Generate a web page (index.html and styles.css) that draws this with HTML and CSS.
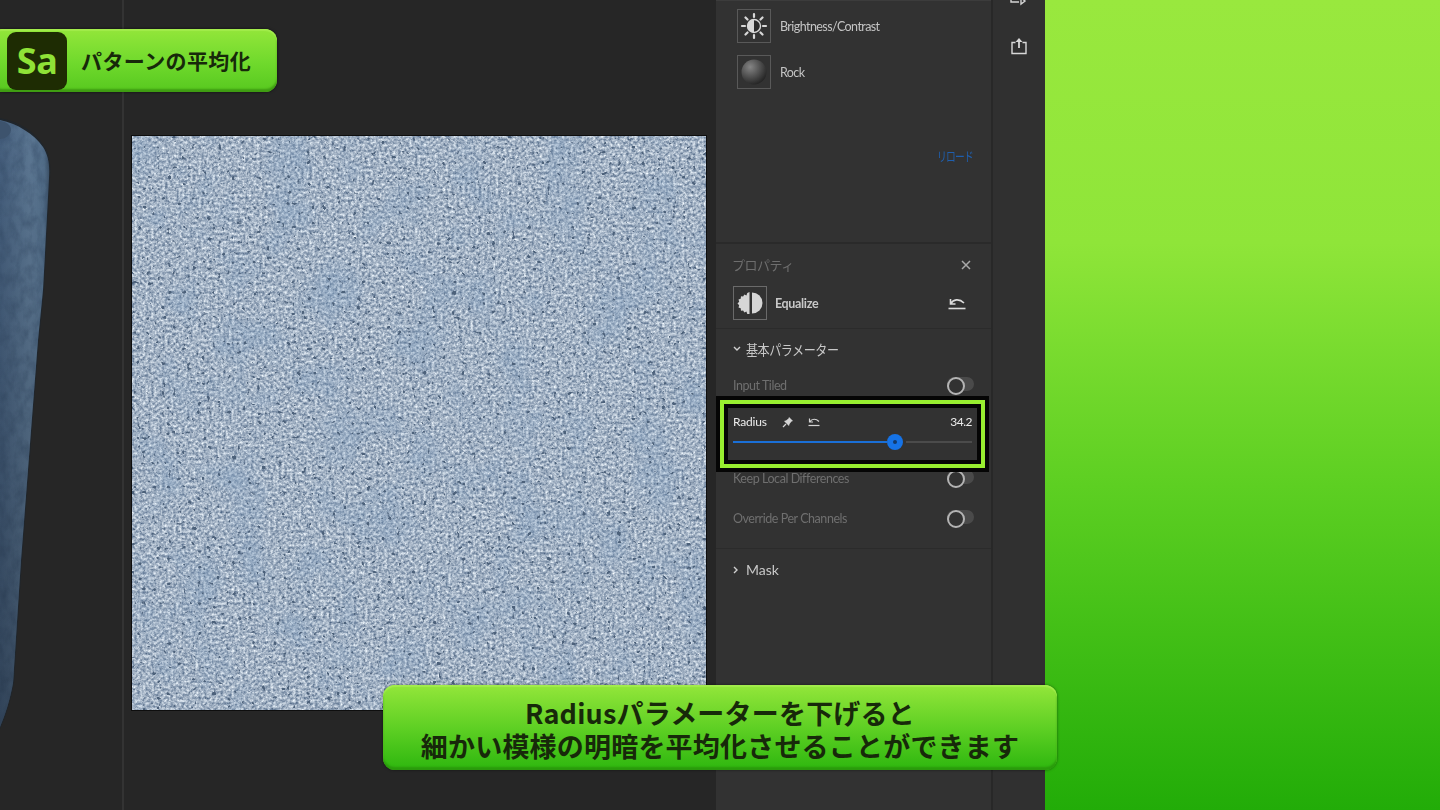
FILE: index.html
```html
<!DOCTYPE html>
<html lang="ja">
<head>
<meta charset="utf-8">
<title>パターンの平均化</title>
<link rel="stylesheet" href="styles.css">
</head>
<body>
<div class="stage">
  <main class="workspace">
    <section class="pane-3d">
      <svg class="vase" viewBox="0 0 122 810" width="122" height="810" aria-hidden="true">
        <defs>
          <linearGradient id="vaseShade" x1="0" x2="1" y1="0" y2="0">
            <stop offset="0" stop-color="#46607e"/>
            <stop offset=".6" stop-color="#5c7793"/>
            <stop offset=".88" stop-color="#54708c"/>
            <stop offset="1" stop-color="#3a4e64"/>
          </linearGradient>
          <linearGradient id="vaseFade" x1="0" x2="0" y1="0" y2="1">
            <stop offset="0" stop-color="#000" stop-opacity="0"/>
            <stop offset="1" stop-color="#000" stop-opacity=".3"/>
          </linearGradient>
          <filter id="vaseGrain" x="0" y="0" width="100%" height="100%" color-interpolation-filters="sRGB">
            <feTurbulence type="fractalNoise" baseFrequency=".12 .07" numOctaves="4" seed="5"/>
            <feColorMatrix values="0 0 0 0 .2  0 0 0 0 .29  0 0 0 0 .4  .9 0 0 0 -.33"/>
            <feComposite in2="SourceGraphic" operator="in"/>
          </filter>
          <clipPath id="vaseClip">
            <path d="M0 120C18 124 34 134 43 147C48 155 50 164 49 178L43 290L38 340L21 560L13 683C10 700 5 715 0 727Z"/>
          </clipPath>
        </defs>
        <path d="M0 118C20 122 35 132 44 146C50 155 51 164 50 178L44 290L39 340L22 560L14 683C11 700 6 716 0 729Z" fill="#20262c"/>
        <g clip-path="url(#vaseClip)">
          <rect x="0" y="118" width="50" height="612" fill="url(#vaseShade)"/>
          <rect x="0" y="118" width="50" height="612" filter="url(#vaseGrain)"/>
          <rect x="0" y="118" width="50" height="612" fill="url(#vaseFade)"/>
          <ellipse cx="0" cy="130" rx="11" ry="9" fill="#3d536d"/>
        </g>
      </svg>
    </section>
    <section class="pane-2d">
      <svg class="texture" viewBox="0 0 574 574" width="574" height="574" aria-label="テクスチャ">
        <defs>
          <filter id="stone" x="0" y="0" width="100%" height="100%" color-interpolation-filters="sRGB">
            <feTurbulence type="fractalNoise" baseFrequency=".36" numOctaves="4" seed="11" result="fine"/>
            <feColorMatrix in="fine" result="base" values=".8 0 0 0 .24  .72 0 0 0 .34  .6 0 0 0 .47  0 0 0 0 1"/>
            <feTurbulence type="fractalNoise" baseFrequency=".022" numOctaves="3" seed="4" result="patch"/>
            <feColorMatrix in="patch" result="patchTint" values="0 0 0 0 .5  0 0 0 0 .62  0 0 0 0 .75  1 0 0 0 -.47"/>
            <feTurbulence type="fractalNoise" baseFrequency=".2" numOctaves="2" seed="23" result="speck"/>
            <feColorMatrix in="speck" result="specks" values="0 0 0 0 .3  0 0 0 0 .38  0 0 0 0 .48  12 0 0 0 -8.300"/>
            <feMerge>
              <feMergeNode in="base"/>
              <feMergeNode in="patchTint"/>
              <feMergeNode in="specks"/>
            </feMerge>
          </filter>
        </defs>
        <rect width="574" height="574" filter="url(#stone)"/>
      </svg>
    </section>
  </main>

  <aside class="panel">
    <section class="layers">
      <div class="layer">
        <span class="thumb">
          <svg viewBox="0 0 34 34" width="34" height="34" aria-hidden="true">
            <circle cx="17" cy="17" r="6.500" fill="#2c2c2c" stroke="#d8d8d8" stroke-width="1.400"/>
            <path d="M17 10.500a6.500 6.500 0 0 0 0 13Z" fill="#d8d8d8"/>
            <path d="M17 5v3M17 26v3M5 17h3M26 17h3M8.500 8.500l2 2M23.500 23.500l2 2M8.500 25.500l2-2M23.500 10.500l2-2" stroke="#d8d8d8" stroke-width="2.200" stroke-linecap="round"/>
          </svg>
        </span>
        <span class="layer-name">Brightness/Contrast</span>
      </div>
      <div class="layer">
        <span class="thumb">
          <svg viewBox="0 0 34 34" width="34" height="34" aria-hidden="true">
            <defs>
              <radialGradient id="ball" cx=".35" cy=".3" r=".8">
                <stop offset="0" stop-color="#858585"/>
                <stop offset=".5" stop-color="#505050"/>
                <stop offset="1" stop-color="#1c1c1c"/>
              </radialGradient>
            </defs>
            <circle cx="17" cy="17" r="12.500" fill="url(#ball)"/>
          </svg>
        </span>
        <span class="layer-name">Rock</span>
      </div>
      <div class="reload-row"><span class="reload">リロード</span></div>
    </section>

    <section class="properties">
      <header class="prop-head">
        <span class="prop-title">プロパティ</span>
        <svg class="close" viewBox="0 0 10 10" width="10" height="10" aria-hidden="true">
          <path d="M1 1l8 8M9 1l-8 8" stroke="#a8a8a8" stroke-width="1.500"/>
        </svg>
      </header>
      <div class="node-row">
        <span class="thumb node-thumb">
          <svg viewBox="0 0 34 34" width="34" height="34" aria-hidden="true">
            <path d="M19 6.500a10.500 10.500 0 0 1 0 21Z" fill="#d6d6d6"/>
            <path d="M16.500 6v22h-2.200l-.9-2.400-2 .9-1.300-2-2.100.2-.3-2.400-2.200-.8.7-2.300-1.700-1.700 1.700-1.700-.7-2.300 2.200-.8.3-2.400 2.100.2 1.300-2 2 .9.9-2.400Z" fill="#d6d6d6"/>
          </svg>
        </span>
        <strong class="node-name">Equalize</strong>
        <svg class="undo-big" viewBox="0 0 20 16" width="20" height="16" aria-hidden="true">
          <path d="M4 8.500C6 4.500 12 3 17 8M3.500 4v5h5" fill="none" stroke="#dcdcdc" stroke-width="1.600"/>
          <path d="M1.500 13.500h17" stroke="#dcdcdc" stroke-width="1.600"/>
        </svg>
      </div>
      <div class="group-head">
        <svg viewBox="0 0 8 6" width="8" height="6" aria-hidden="true"><path d="M1 1l3 3 3-3" fill="none" stroke="#d0d0d0" stroke-width="1.400"/></svg>
        <span class="group-title">基本パラメーター</span>
      </div>
      <div class="param param-first">
        <span class="param-label">Input Tiled</span>
        <span class="toggle"></span>
      </div>
      <div class="radius">
        <div class="radius-top">
          <span class="radius-label">Radius</span>
          <svg class="pin" viewBox="0 0 12 12" width="12" height="12" aria-hidden="true">
            <path d="M7 1l4 4-1.500.5L7.500 8 7 10 2 5l2-.5L6.500 2.500Z" fill="#d4d4d4"/>
            <path d="M4 8l-3 3" stroke="#d4d4d4" stroke-width="1.200"/>
          </svg>
          <svg class="undo-small" viewBox="0 0 14 12" width="14" height="12" aria-hidden="true">
            <path d="M3 5.500C5 2.500 9 2.500 12 5.500M2.500 2.500v3.500H6" fill="none" stroke="#d4d4d4" stroke-width="1.200"/>
            <path d="M1.500 9.500h11" stroke="#d4d4d4" stroke-width="1.200"/>
          </svg>
          <span class="radius-value">34.2</span>
        </div>
        <div class="slider">
          <span class="slider-fill"></span>
          <span class="slider-thumb"></span>
          <span class="slider-rest"></span>
        </div>
      </div>
      <div class="param param-keep">
        <span class="param-label">Keep Local Differences</span>
        <span class="toggle"></span>
      </div>
      <div class="param param-override">
        <span class="param-label">Override Per Channels</span>
        <span class="toggle"></span>
      </div>
      <div class="group-head group-mask">
        <svg viewBox="0 0 6 8" width="6" height="8" aria-hidden="true"><path d="M1 1l3 3-3 3" fill="none" stroke="#d0d0d0" stroke-width="1.400"/></svg>
        <span>Mask</span>
      </div>
    </section>
  </aside>

  <nav class="toolbar">
    <svg class="tool-top" viewBox="0 0 18 8" width="18" height="8" aria-hidden="true">
      <path d="M1 1v3h8M11 0l4 3-4 3Z" fill="none" stroke="#d4d4d4" stroke-width="1.400"/>
    </svg>
    <svg class="tool-share" viewBox="0 0 18 18" width="18" height="18" aria-hidden="true">
      <path d="M5.500 5.500H2v11h14v-11h-3.500" fill="none" stroke="#d8d8d8" stroke-width="1.400"/>
      <path d="M9 11V3" stroke="#d8d8d8" stroke-width="1.800"/>
      <path d="M5.500 5L9 1l3.500 4Z" fill="#d8d8d8"/>
    </svg>
  </nav>

  <div class="backdrop"></div>

  <div class="badge">
    <span class="logo">Sa</span>
    <span class="badge-text">パターンの平均化</span>
  </div>

  <div class="caption">
    <p>Radiusパラメーターを下げると</p>
    <p>細かい模様の明暗を平均化させることができます</p>
  </div>
</div>
</body>
</html>
```
FILE: styles.css
```css
* { box-sizing: border-box; }

html, body {
  margin: 0;
  height: 100%;
  overflow: hidden;
  background: #262626;
}

.stage {
  position: relative;
  display: flex;
  width: 1440px;
  height: 810px;
  overflow: hidden;
  font-family: Lato, "Noto Sans CJK JP", sans-serif;
}

/* workspace */
.workspace {
  display: flex;
  width: 716px;
  height: 810px;
  background: #262626;
}

.pane-3d {
  width: 124px;
  height: 810px;
  border-right: 2px solid #333333;
  flex: none;
}

.vase {
  display: block;
  filter: blur(.5px);
}

.pane-2d {
  flex: 1;
  padding: 136px 0 0 8px;
}

.texture {
  display: block;
  box-shadow: 0 0 0 1px #0e0e0e;
  filter: blur(.5px);
}

/* panel */
.panel {
  width: 277px;
  height: 810px;
  flex: none;
  background: #323232;
  border-right: 2px solid #282828;
  display: flex;
  flex-direction: column;
  filter: blur(.3px);
}

.layers {
  height: 244px;
  padding-top: 8px;
  border-top: 1px solid #3c3c3c;
  border-bottom: 2px solid #2a2a2a;
}

.layer {
  display: flex;
  align-items: center;
  gap: 9px;
  height: 34px;
  margin: 0 0 12px 21px;
}

.thumb {
  display: block;
  width: 34px;
  height: 34px;
  border: 1px solid #595959;
  flex: none;
}

.thumb svg {
  display: block;
  margin: -1px;
}

.layer-name {
  font-size: 12.500px;
  letter-spacing: -.58px;
  color: #c4c4c4;
}

.reload-row {
  display: flex;
  justify-content: flex-end;
  padding: 46px 18px 0 0;
}

.reload {
  display: block;
  font-size: 13px;
  line-height: 18px;
  color: #1f5fae;
  letter-spacing: -1px;
  transform: scaleX(.75);
  transform-origin: right center;
}

.properties {
  flex: 1;
  display: flex;
  flex-direction: column;
}

.prop-head {
  height: 42px;
  padding: 0 20px 0 16px;
  display: flex;
  justify-content: space-between;
  align-items: center;
}

.prop-title {
  margin-bottom: 2px;
  font-size: 13px;
  color: #6e6e6e;
  letter-spacing: -.5px;
}

.node-row {
  height: 34px;
  padding: 0 24px 8px 17px;
  display: flex;
  align-items: center;
  border-bottom: 1px solid #2b2b2b;
  box-sizing: content-box;
}

.node-thumb { border-color: #6a6a6a; }

.node-name {
  margin-left: 8px;
  font-size: 12.500px;
  letter-spacing: -.35px;
  color: #c8c8c8;
  font-weight: 700;
}

.undo-big { margin-left: auto; }

.group-head {
  display: flex;
  align-items: center;
  gap: 5px;
  height: 39px;
  padding-left: 17px;
  font-size: 14px;
  color: #c8c8c8;
}

.group-title {
  display: block;
  letter-spacing: -.5px;
  transform: scaleX(.86);
  transform-origin: left center;
}

.param {
  display: flex;
  align-items: center;
  justify-content: space-between;
  height: 24px;
  padding: 0 17px 0 17px;
  font-size: 12.500px;
  letter-spacing: -.45px;
  color: #6f6f6f;
}

.param-first { margin-top: 5px; }
.param-keep { margin-top: 6px; }
.param-override { margin-top: 16px; }

.toggle {
  position: relative;
  display: block;
  width: 27px;
  height: 14px;
  margin-top: -2px;
  border-radius: 7px;
  background: #4a4a4a;
}

.toggle::before {
  content: "";
  position: absolute;
  left: 0;
  top: 0;
  width: 14px;
  height: 14px;
  border-radius: 50%;
  background: #323232;
  border: 2px solid #b4b4b4;
}

.radius {
  position: relative;
  z-index: 2;
  height: 52px;
  margin: 11px 14px 0 12px;
  padding: 0 5px;
  background: #323232;
  box-shadow: 0 0 0 4px #050505, 0 0 0 8px #98ee30, 0 0 0 12px #050505;
}

.radius-top {
  display: flex;
  align-items: center;
  height: 27px;
  font-size: 12px;
  color: #ececec;
}

.radius-label { letter-spacing: -.2px; }
.pin { margin-left: 15px; }
.undo-small { margin-left: 13px; }

.radius-value {
  margin-left: auto;
  letter-spacing: -.5px;
}

.slider {
  display: flex;
  align-items: center;
  height: 16px;
  margin-top: -1px;
}

.slider-fill {
  display: block;
  width: 154px;
  height: 2px;
  background: #1a6fd6;
}

.slider-thumb {
  position: relative;
  display: block;
  width: 16px;
  height: 16px;
  border-radius: 50%;
  background: #1673e6;
  flex: none;
}

.slider-thumb::after {
  content: "";
  position: absolute;
  left: 6px;
  top: 6px;
  width: 4px;
  height: 4px;
  border-radius: 50%;
  background: #123a6b;
}

.slider-rest {
  display: block;
  flex: 1;
  height: 2px;
  margin-left: 3px;
  background: #4b4b4b;
}

.group-mask {
  margin-top: 18px;
  height: 42px;
  border-top: 1px solid #2b2b2b;
  gap: 7px;
}

/* toolbar */
.toolbar {
  width: 52px;
  height: 810px;
  flex: none;
  background: #303030;
  display: flex;
  flex-direction: column;
  align-items: center;
  filter: blur(.3px);
}

.tool-top { display: block; margin-top: -2px; }
.tool-share { display: block; margin-top: 31px; }

/* green background */
.backdrop {
  flex: 1;
  height: 810px;
  background: linear-gradient(180deg, #99e83e 0%, #8fe539 30%, #5dcf22 60%, #22ac08 100%);
}

/* overlays */
.badge {
  position: absolute;
  left: -10px;
  top: 29px;
  width: 287px;
  height: 63px;
  display: flex;
  align-items: center;
  padding-left: 17px;
  gap: 14px;
  border-radius: 12px;
  background: linear-gradient(180deg, #93e63a 0%, #6fd92c 55%, #57c81f 100%);
  box-shadow: inset 0 2px 1px #a2ec4c, inset 0 -3px 2px #3f9c12, 0 0 3px rgba(0, 0, 0, .6);
}

.logo {
  display: flex;
  align-items: center;
  justify-content: center;
  width: 60px;
  height: 58px;
  border-radius: 9px;
  background: #1e2c03;
  color: #8fe237;
  font-family: "Noto Sans", sans-serif;
  font-size: 36px;
  font-weight: 700;
  letter-spacing: -.5px;
}

.badge-text {
  position: relative;
  top: -1px;
  font-family: "Noto Sans CJK JP", sans-serif;
  font-size: 21px;
  font-weight: 700;
  letter-spacing: .4px;
  color: #17290a;
}

.caption {
  position: absolute;
  left: 383px;
  top: 685px;
  width: 674px;
  height: 85px;
  padding-top: 11px;
  border-radius: 12px;
  background: linear-gradient(180deg, #93e63a 0%, #5fd024 50%, #2eb70f 100%);
  box-shadow: inset 0 2px 1px #a2ec4c, inset 0 -3px 2px #2a9a0c, 0 0 3px rgba(0, 0, 0, .5);
  text-align: center;
  font-family: "Noto Sans CJK JP", sans-serif;
  font-size: 27px;
  font-weight: 700;
  letter-spacing: .2px;
  line-height: 33px;
  color: #17290a;
}

.caption p { margin: 0; }
```
